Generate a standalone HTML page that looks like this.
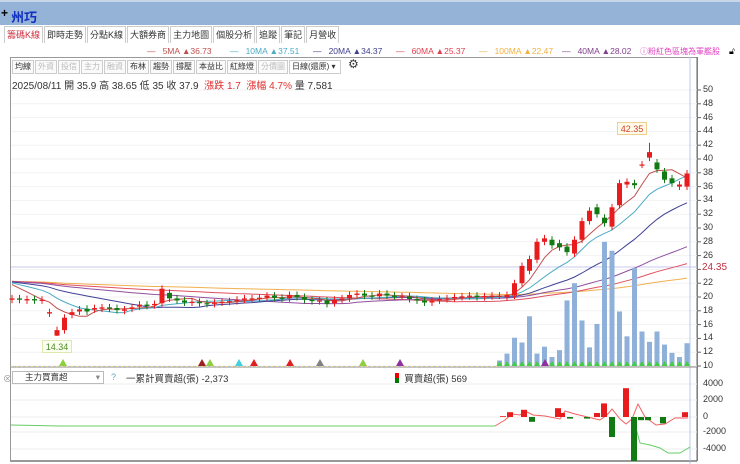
<!DOCTYPE html>
<html><head><meta charset="utf-8"><style>
*{margin:0;padding:0;box-sizing:border-box}
body{width:740px;height:464px;overflow:hidden;background:#fff;font-family:"Liberation Sans","Noto Sans CJK TC",sans-serif;position:relative}
.top{position:absolute;left:0;top:0;width:740px;height:25px;background:#95b3d7;border-top:2px solid #c8d6e8}
.top span{position:absolute;left:11px;top:5px;font-size:13px;font-weight:bold;color:#1030c0}
.top b{position:absolute;left:1px;top:4px;font-size:12px;color:#000}
.tabs{position:absolute;top:26px;left:4px;height:17px;display:flex}
.tabs div{border:1px solid #ccc;border-bottom:none;font-size:9px;padding:2px 2px;color:#333;background:#fff;margin-right:1px;line-height:12px}
.tabs div.a{color:#d03040}
.leg{position:absolute;top:46px;font-size:8.5px;white-space:nowrap}
.tb{position:absolute;top:60px;left:12px;display:flex;font-size:8px}
.tb div{border:1px solid #ccc;padding:1px 2px;margin-right:1px;color:#333;background:#fafafa;line-height:10px}
.tb div.g{color:#bbb}
.info{position:absolute;top:77px;left:12px;font-size:10px;color:#333;white-space:nowrap}
.ax{position:absolute;left:703px;font-size:9px;color:#333}
svg{position:absolute;left:0;top:0}
</style></head><body>
<div class="top"><b>+</b><span>州巧</span></div>
<div class="tabs"><div class="a">籌碼K線</div><div>即時走勢</div><div>分點K線</div><div>大額券商</div><div>主力地圖</div><div>個股分析</div><div>追蹤</div><div>筆記</div><div>月營收</div></div>
<div class="leg" style="left:147px;color:#c0504d">—&nbsp;&nbsp;&nbsp;5MA ▲36.73</div>
<div class="leg" style="left:230px;color:#4bacc6">—&nbsp;&nbsp;&nbsp;10MA ▲37.51</div>
<div class="leg" style="left:313px;color:#404090">—&nbsp;&nbsp;&nbsp;20MA ▲34.37</div>
<div class="leg" style="left:396px;color:#e04050">—&nbsp;&nbsp;&nbsp;60MA ▲25.37</div>
<div class="leg" style="left:479px;color:#f0b040">—&nbsp;&nbsp;&nbsp;100MA ▲22.47</div>
<div class="leg" style="left:562px;color:#80408a">—&nbsp;&nbsp;&nbsp;40MA ▲28.02</div>
<div class="leg" style="left:640px;color:#e040c0;font-size:8px">ⓘ粉紅色區塊為軍艦股</div>
<div class="leg" style="left:729px;color:#000;font-size:9px">🔓︎</div>
<div class="tb"><div>均線</div><div class="g">外資</div><div class="g">投信</div><div class="g">主力</div><div class="g">融資</div><div>布林</div><div>趨勢</div><div>撐壓</div><div>本益比</div><div>紅綠燈</div><div class="g">分價圖</div><div style="background:#fff;width:52px">日線(還原) ▾</div><div style="border:none;background:none;font-size:12px;margin-top:-2px;margin-left:4px">⚙</div></div>
<div class="info">2025/08/11 開 35.9 高 38.65 低 35 收 37.9 <span style="color:#e03030">&nbsp;漲跌 1.7&nbsp; 漲幅 4.7%</span> 量 7,581</div>
<div id="axes"></div>
<svg id="s" width="740" height="464"></svg>
<div style="position:absolute;left:12px;top:371px;width:92px;height:13px;border:1px solid #bbb;font-size:8.5px;color:#333;padding-left:12px;line-height:11px;background:#fff">主力買賣超<span style="position:absolute;right:3px;color:#888">▾</span></div>
<div style="position:absolute;left:3px;top:372px;font-size:9px;color:#999">⊗</div>
<div style="position:absolute;left:111px;top:372px;font-size:9px;color:#6ab">?</div>
<div style="position:absolute;left:126px;top:371px;font-size:9.5px;color:#333">一累計買賣超(張) -2,373</div>
<div style="position:absolute;left:395px;top:371px;font-size:9.5px;color:#333"><span style="display:inline-block;width:4px;height:10px;background:linear-gradient(#e00 50%,#070 50%);vertical-align:-1px"></span>&nbsp; 買賣超(張) 569</div>
<div style="position:absolute;left:617px;top:122px;width:30px;height:13px;border:1px solid #f0d090;background:#fffbe8;font-size:9px;color:#d04030;text-align:center;line-height:12px">42.35</div>
<div style="position:absolute;left:42px;top:340px;width:30px;height:13px;border:1px solid #dde8b0;background:#fafff0;font-size:9px;color:#4a8a20;text-align:center;line-height:12px">14.34</div>
<div class="ax" style="top:262px;color:#c03040;font-size:10px;left:702px;background:#fff">24.35</div>
<script>
var s=document.getElementById('s'),h='';
function Y(p){return 366-(p-10)*6.9}
h+='<rect x="10.5" y="57.5" width="687" height="403" fill="none" stroke="#999"/>';
h+='<line x1="697" y1="57" x2="697" y2="461" stroke="#666"/>';
var ax='';
for(var p=10;p<=50;p+=2){var y=Y(p);h+='<line x1="11" y1="'+y+'" x2="697" y2="'+y+'" stroke="#f2f2f2"/><line x1="697" y1="'+y+'" x2="701" y2="'+y+'" stroke="#666"/>';ax+='<div class="ax" style="top:'+(y-6)+'px">'+p+'</div>';}
var lv=[[4000,384],[2000,400],[0,417],[-2000,432],[-4000,449]];
lv.forEach(function(a){h+='<line x1="11" y1="'+a[1]+'" x2="697" y2="'+a[1]+'" stroke="#eee"/>';ax+='<div class="ax" style="top:'+(a[1]-6)+'px">'+a[0]+'</div>';});
document.getElementById('axes').innerHTML=ax;
h+='<line x1="11" y1="267" x2="697" y2="267" stroke="#c8c8f0"/>';
h+='<line x1="690" y1="57" x2="690" y2="464" stroke="#b8c8f0"/>';
h+='<line x1="11" y1="367" x2="697" y2="367" stroke="#888"/>';
var c=[19.8,19.6,19.7,19.5,19.6,17.8,15.2,17,17.8,18.2,17.9,18.4,18.5,18.3,18.1,18.2,18.5,18.9,18.7,19,21.2,19.8,19.5,19.2,19.3,19.1,19,19.2,19.3,19.4,19.6,19.8,19.8,19.9,20.2,19.9,19.8,20.3,20,19.6,19.4,19.5,19,19.6,19.8,20.3,20.5,20.2,20.1,20.5,20.2,20.1,20.1,19.7,19.5,19.2,19.5,19.7,19.8,20,20.1,20.2,20,20.1,20.2,
20.2,20.3,22,24.5,25.5,28,28.5,27.5,27.2,26.5,28.3,31,32.5,32,30.7,33,36.5,36.7,36.2,39.2,41,38.5,37,36.5,36.3,37.9];
var o=[19.6,19.8,19.5,19.7,19.5,17.6,14.4,15.2,17.4,17.9,18.3,18.2,18.3,18.5,18.4,18,18.3,18.6,18.9,18.8,19.1,20.6,19.8,19.5,19.2,19.3,19.1,19,19.2,19.3,19.4,19.6,19.8,19.8,19.9,20.2,19.9,19.8,20.3,20,19.6,19.4,19.5,19.1,19.6,19.8,20.3,20.5,20.2,20.1,20.5,20.2,20.1,20.1,19.7,19.5,19.2,19.5,19.7,19.8,20,20.1,20.2,20,20.1,
20.2,20,20.2,22,23.8,25.4,28,28.3,27.8,27.3,26.3,28.3,31,33,31.5,30.2,33.3,36.3,36.5,39.2,40.2,39.5,38.2,37.2,36,36];
var n=c.length;
function ma(k){var pts=[];for(var i=0;i<n;i++){var s2=0;for(var j=i-k+1;j<=i;j++)s2+=(j<0?22.3:c[j]);pts.push((12+7.5*i).toFixed(1)+','+Y(s2/k).toFixed(1));}return pts.join(' ');}
[[100,'#f0b050'],[60,'#e05060'],[40,'#9050a0'],[20,'#404098'],[10,'#4bacc6'],[5,'#c0504d']].forEach(function(m){h+='<polyline points="'+ma(m[0])+'" fill="none" stroke="'+m[1]+'" stroke-width="1"/>';});
var v=[10.8,11.8,14.1,13.4,17.2,11.8,12.8,11.3,12.3,19.5,22,16.6,12.7,16.1,28,26.7,17.9,14.3,24.2,15,13.5,15,13.1,11.9,11.3,13.3];
v.forEach(function(t,i){var x=12+7.5*(65+i);h+='<rect x="'+(x-2.5)+'" y="'+Y(t)+'" width="5" height="'+(366-Y(t))+'" fill="#8fb0d8"/>';h+='<path d="M'+(x-3)+' 366 L'+x+' 361 L'+(x+3)+' 366Z" fill="#4c4"/>';});
for(var i=0;i<n;i++){var x=12+7.5*i,hi=Math.max(o[i],c[i]),lo=Math.min(o[i],c[i]);var col=c[i]>=o[i]?'#e81c1c':'#127a12';
var wh=hi+0.5,wl=lo-0.5;if(i==85)wh=42.35;if(i==6)wl=14.34;
h+='<line x1="'+x+'" y1="'+Y(wh)+'" x2="'+x+'" y2="'+Y(wl)+'" stroke="'+col+'"/>';
h+='<rect x="'+(x-2.5)+'" y="'+Y(hi)+'" width="5" height="'+Math.max(1.2,Y(lo)-Y(hi))+'" fill="'+col+'"/>';}
[[63,'#8cd040'],[202,'#a02020'],[210,'#8cd040'],[239,'#40d0e0'],[254,'#e02020'],[290,'#e02020'],[320,'#808080'],[363,'#8cd040'],[400,'#9030a0'],[545,'#9030a0']].forEach(function(m){h+='<path d="M'+(m[0]-4)+' 366 L'+m[0]+' 359 L'+(m[0]+4)+' 366Z" fill="'+m[1]+'"/>';});
h+='<line x1="11" y1="366.5" x2="497" y2="366.5" stroke="#e8d890" stroke-dasharray="2,3"/>';
h+='<polyline points="11,425 60,426 80,426 495,426" fill="none" stroke="#6c6" />';
h+='<polyline points="495,426 505,420 512,414 520,415 525,411 533,415 545,416 560,419 565,411 575,414 600,420 607,415 612,409 620,419 626,424 632,419 638,404 645,417 656,425 665,424 675,418 688,418" fill="none" stroke="#f06060"/>';
h+='<polyline points="633,417 640,443 650,445 660,448 668,453 680,453 690,447" fill="none" stroke="#6c6"/>';
var b=[[510,6],[524,9],[532,-6],[558,11],[562,5],[570,-2],[587,-2],[597,5],[604,17],[612,-25],[626,36],[634,-55],[641,-4],[648,-4],[663,-8],[685,6],[503,1]];
b.forEach(function(a){var col=a[1]>0?'#e81c1c':'#127a12';var hh=Math.abs(a[1]*0.8);var y1=a[1]>0?417-hh:417;h+='<rect x="'+(a[0]-3)+'" y="'+y1+'" width="6" height="'+hh+'" fill="'+col+'"/>';});
h+='<line x1="10.5" y1="368" x2="10.5" y2="461" stroke="#999"/><line x1="10" y1="461.5" x2="697" y2="461.5" stroke="#999"/>';
s.innerHTML=h;
</script>
</body></html>
